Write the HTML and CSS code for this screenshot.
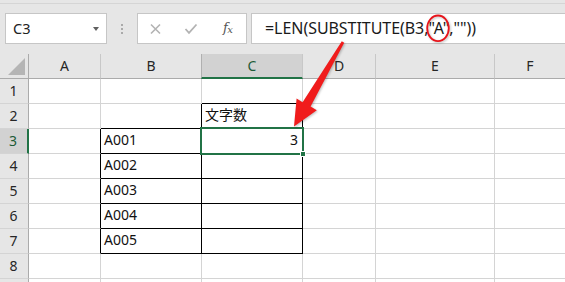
FILE: index.html
```html
<!DOCTYPE html>
<html lang="ja">
<head>
<meta charset="utf-8">
<title>Excel LEN SUBSTITUTE</title>
<link rel="stylesheet" href="styles.css">
</head>
<body>
<div class="app">
  <div class="toolbar">
    <div class="namebox">
      <span class="name">C3</span>
      <span class="caret"></span>
    </div>
    <div class="grip"><i></i><i></i><i></i></div>
    <div class="buttons">
      <svg class="btn" width="14" height="12" viewBox="0 0 14 12"><path d="M2 1.5 L11 10.5 M11 1.5 L2 10.5" stroke="#b3b3b3" stroke-width="1.6" fill="none"/></svg>
      <svg class="btn" width="14" height="12" viewBox="0 0 14 12"><path d="M1.5 6 L5 9.8 L12.5 1.5" stroke="#b3b3b3" stroke-width="1.8" fill="none"/></svg>
      <span class="fx">f<sub>x</sub></span>
    </div>
    <div class="formula">=LEN(SUBSTITUTE(B3,"A",""))</div>
  </div>
  <div class="grid">
    <div class="corner"><span class="tri"></span></div>
    <div class="ch">A</div>
    <div class="ch">B</div>
    <div class="ch sel">C</div>
    <div class="ch">D</div>
    <div class="ch">E</div>
    <div class="ch">F</div>

    <div class="rh">1</div>
    <div class="c"></div><div class="c"></div><div class="c bb"></div><div class="c"></div><div class="c"></div><div class="c"></div>

    <div class="rh">2</div>
    <div class="c"></div><div class="c br bb"></div><div class="c br bb t">文字数</div><div class="c"></div><div class="c"></div><div class="c"></div>

    <div class="rh sel">3</div>
    <div class="c br"></div><div class="c br bb t">A001</div><div class="c br bb t num">3<span class="cursor"><span class="handle"></span></span></div><div class="c"></div><div class="c"></div><div class="c"></div>

    <div class="rh">4</div>
    <div class="c br"></div><div class="c br bb t">A002</div><div class="c br bb"></div><div class="c"></div><div class="c"></div><div class="c"></div>

    <div class="rh">5</div>
    <div class="c br"></div><div class="c br bb t">A003</div><div class="c br bb"></div><div class="c"></div><div class="c"></div><div class="c"></div>

    <div class="rh">6</div>
    <div class="c br"></div><div class="c br bb t">A004</div><div class="c br bb"></div><div class="c"></div><div class="c"></div><div class="c"></div>

    <div class="rh">7</div>
    <div class="c br"></div><div class="c br bb t">A005</div><div class="c br bb"></div><div class="c"></div><div class="c"></div><div class="c"></div>

    <div class="rh">8</div>
    <div class="c"></div><div class="c"></div><div class="c"></div><div class="c"></div><div class="c"></div><div class="c"></div>

    <div class="rh"></div>
    <div class="c"></div><div class="c"></div><div class="c"></div><div class="c"></div><div class="c"></div><div class="c"></div>
  </div>
  <svg class="annot" width="565" height="282" viewBox="0 0 565 282">
    <ellipse cx="438" cy="28.3" rx="10.8" ry="12.8" fill="none" stroke="#e8141b" stroke-width="1.8"/>
    <polygon points="344.2,42.7 341.8,41.3 302.6,102.2 296.6,98.6 294,126.5 316.8,110.2 310.6,106.6" fill="#f01c1c"/>
  </svg>
</div>
</body>
</html>
```

FILE: styles.css
```css
* { box-sizing: border-box; }
html, body { margin: 0; padding: 0; background: #ffffff; }
body { width: 565px; height: 282px; overflow: hidden; font-family: "Noto Sans", "Noto Sans CJK JP", sans-serif; color: #1a1a1a; }
.app { position: relative; width: 565px; height: 282px; overflow: hidden; }

.toolbar { height: 54px; background: #e6e6e6; border-top: 3px solid #e6e6e6; box-shadow: inset 0 1px 0 #d5d5d5; padding-top: 10px; display: flex; align-items: flex-start; }
.namebox { margin-left: 5px; width: 102px; height: 31px; background: #fff; border: 1px solid #c6c6c6; display: flex; align-items: center; justify-content: space-between; padding: 0 7px 1px 7px; }
.name { font-size: 14.5px; color: #222; }
.caret { width: 0; height: 0; border-left: 3.5px solid transparent; border-right: 3.5px solid transparent; border-top: 4px solid #606060; margin-top: 1px; }
.grip { width: 30px; height: 31px; display: flex; flex-direction: column; align-items: center; justify-content: center; gap: 2px; }
.grip i { display: block; width: 2px; height: 2px; background: #aaaaaa; }
.buttons { width: 110px; height: 31px; background: #fff; border: 1px solid #c6c6c6; display: flex; align-items: center; padding-left: 11px; gap: 21px; }
.btn { display: block; }
.fx { font-family: "DejaVu Serif", "Liberation Serif", serif; font-style: italic; font-size: 13px; color: #555; margin-left: 4px; letter-spacing: -0.5px; line-height: 1; margin-top: -2px; }
.fx sub { font-size: 10px; vertical-align: -1px; }
.formula { margin-left: 4px; flex: 1; margin-right: -3px; height: 31px; background: #fff; border: 1px solid #c6c6c6; font-size: 16px; line-height: 28px; padding-left: 13px; color: #1a1a1a; white-space: nowrap; letter-spacing: -0.05px; }

.grid { display: grid; grid-template-columns: 29px 72px 101px 101px 73px 119px 71px; grid-auto-rows: 25px; }
.corner { background: #e6e6e6; border-right: 1px solid #ababab; border-bottom: 1px solid #ababab; position: relative; }
.tri { position: absolute; right: 3px; bottom: 3px; width: 0; height: 0; border-left: 17px solid transparent; border-bottom: 17px solid #b5b5b5; }
.ch { background: #e6e6e6; border-right: 1px solid #c8c8c8; border-bottom: 1px solid #ababab; text-align: center; font-size: 14px; line-height: 23px; color: #262626; }
.ch.sel { background: #d2d2d2; border-bottom: 2px solid #217346; color: #1d5b37; border-left: 1px solid #b0b0b0; margin-left: -1px; }
.rh { background: #e6e6e6; border-right: 1px solid #ababab; border-bottom: 1px solid #d4d4d4; text-align: center; font-size: 14px; line-height: 23px; color: #262626; padding-right: 1px; }
.rh.sel { background: #d2d2d2; border-right: 2px solid #217346; color: #1d5b37; }
.c { border-right: 1px solid #d4d4d4; border-bottom: 1px solid #d4d4d4; background: #fff; font-size: 14px; line-height: 22px; padding: 0 3px; white-space: nowrap; color: #111; position: relative; }
.c.br { border-right-color: #000; }
.c.bb { border-bottom-color: #000; }
.c.num { text-align: right; padding-right: 4px; }
.cursor { position: absolute; z-index: 2; left: -2px; top: -2px; right: -2px; bottom: -2px; border: 2px solid #217346; pointer-events: none; }
.handle { position: absolute; right: -4px; bottom: -4px; width: 6px; height: 6px; background: #217346; border: 1px solid #fff; }

.annot { position: absolute; z-index: 5; left: 0; top: 0; pointer-events: none; filter: drop-shadow(1px 1px 1px rgba(0,0,0,0.25)); }
```
